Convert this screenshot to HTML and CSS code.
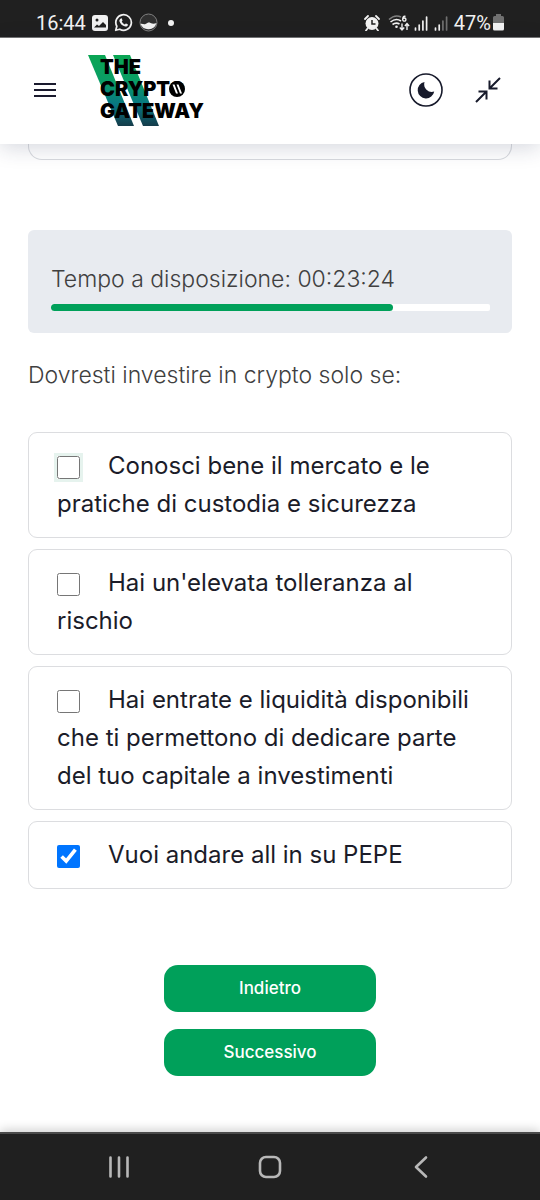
FILE: index.html
```html
<!DOCTYPE html>
<html lang="it">
<head>
<meta charset="utf-8">
<meta name="viewport" content="width=device-width, initial-scale=1">
<title>The Crypto Gateway</title>
<link rel="stylesheet" href="styles.css">
</head>
<body>
<div class="status-bar">
  <div class="status-group">
    <span class="status-text">16:44</span>
    <svg width="16" height="16" viewBox="0 0 16 16" aria-hidden="true"><rect width="16" height="16" rx="3" fill="#f2f2f2"/><circle cx="5" cy="5" r="1.5" fill="#202020"/><path d="M2 12.500l3-3 2 1.500 4-4 3 3v2.500z" fill="#202020"/></svg>
    <svg width="19" height="19" viewBox="0 0 24 24" aria-hidden="true"><path d="M2.200 21.800l1.400-5A9.800 9.800 0 1 1 7.300 20.500z" fill="none" stroke="#f2f2f2" stroke-width="2.200" stroke-linejoin="round"/><path d="M8.700 6.800c.5-.3 1-.1 1.200.4l.8 1.800c.1.400 0 .7-.9 1.700.9 1.800 2.200 2.900 4 3.700.7-.8 1-1.300 1.400-1.100l2 1c.5.300.5.700.3 1.200-.5 1.300-2 1.900-3.300 1.600-3.600-.8-6.300-3.400-7.400-6.700-.3-1.300.6-3 1.900-3.600z" fill="#f2f2f2"/></svg>
    <svg width="19" height="19" viewBox="0 0 19 19" aria-hidden="true"><circle cx="9.500" cy="9.500" r="8.500" fill="#303030" stroke="#808080"/><path d="M1.500 11c2-1 3 1 5 0s3-2 5-1 4 1 6 0a8.500 8.500 0 0 1-16 1z" fill="#f2f2f2"/></svg>
    <svg class="status-dot" width="6" height="6" viewBox="0 0 6 6" aria-hidden="true"><circle cx="3" cy="3" r="3" fill="#f2f2f2"/></svg>
  </div>
  <div class="status-group status-group-end">
    <svg width="16" height="16" viewBox="0 0 16 16" aria-hidden="true"><circle cx="8" cy="8.500" r="6.500" fill="#f2f2f2"/><path d="M1 4l3-3M15 4l-3-3M3.500 13.500L2 15.500M12.500 13.500l1.500 2" stroke="#f2f2f2" stroke-width="1.800" stroke-linecap="round"/><path d="M8 5v4h3.500" fill="none" stroke="#202020" stroke-width="1.500"/></svg>
    <svg class="wifi" width="22" height="18" viewBox="0 0 22 18" aria-hidden="true"><g fill="none" stroke="#f2f2f2" stroke-width="1.600"><path d="M1 5.500Q7 0 13 3" stroke="#808080"/><path d="M2.500 8Q8 3.500 13 7M4.500 10.500Q8 8 11.500 10"/><path d="M17.500 2.500c-2-.8-2.800 1-2.800 3a1.600 1.600 0 1 0 .4-1" stroke-width="1.400"/><path d="M14 9.500v6M11.800 13.500l2.200 2.500 2.200-2.500M19 16v-6M16.900 12l2.100-2.500 2.100 2.500" stroke-width="1.400"/></g><circle cx="8.500" cy="12.700" r="1.300" fill="#f2f2f2"/></svg>
    <svg width="14" height="16" viewBox="0 0 14 16" aria-hidden="true"><path d="M1.500 15v-2M5.200 15v-5M8.900 15V6M12.600 15V2" stroke="#f2f2f2" stroke-width="1.700" stroke-linecap="round"/></svg>
    <svg class="signal" width="14" height="16" viewBox="0 0 14 16" aria-hidden="true"><path d="M1.500 15v-2M5.200 15v-5" stroke="#f2f2f2" stroke-width="1.700" stroke-linecap="round"/><path d="M8.900 15V6M12.600 15V2" stroke="#707070" stroke-width="1.700" stroke-linecap="round"/></svg>
    <span class="battery"><span class="status-text">47%</span>
    <svg width="11" height="17" viewBox="0 0 11 17" aria-hidden="true"><path d="M3 0h5v2h1.500Q11 2 11 3.500V9H0V3.500Q0 2 1.500 2H3z" fill="#707070"/><path d="M0 9h11v6q0 1.500-1.500 1.500h-8Q0 16.500 0 15z" fill="#f2f2f2"/></svg></span>
  </div>
</div>

<header class="app-header">
  <button class="icon-button" type="button" aria-label="Menu"><svg width="24" height="16" viewBox="0 0 24 16"><path d="M1 2h22M1 8h22M1 14h22" stroke="#1a1a2e" stroke-width="2"/></svg></button>
  <a class="logo" href="#" aria-label="The Crypto Gateway">
    <svg width="118" height="74" viewBox="0 0 118 74">
      <defs><linearGradient id="stripe" x1="0" y1="0" x2="0" y2="1"><stop offset="0" stop-color="#0aa553"/><stop offset=".35" stop-color="#0a9e65"/><stop offset=".7" stop-color="#087783"/><stop offset="1" stop-color="#153c4a"/></linearGradient></defs>
      <path d="M0 2h17l29 71H30z" fill="url(#stripe)"/>
      <path d="M25 2h17l29 71H55z" fill="url(#stripe)"/>
      <g class="logo-text"><text x="12" y="21">THE</text><text x="12" y="43">CRYPTO</text><text x="12" y="65">GATEWAY</text></g>
      <circle cx="89" cy="36" r="8" fill="#000"/>
      <path d="M84.500 31.500h2l3.500 9h-2zM88.500 31.500h2l3.500 9h-2z" fill="#fff"/>
    </svg>
  </a>
  <button class="icon-button theme-button" type="button" aria-label="Tema scuro"><svg width="34" height="34" viewBox="0 0 34 34"><circle cx="17" cy="17" r="16" fill="none" stroke="#171a2b" stroke-width="1.600"/><path d="M15.500 9A8.300 8.300 0 1 0 25.200 18.500 7.700 7.700 0 0 1 15.500 9z" fill="#171a2b"/></svg></button>
  <button class="icon-button" type="button" aria-label="Riduci"><svg width="26" height="26" viewBox="0 0 26 26"><path d="M25 1L14.500 11.500M14.500 3.500v8h8M1 25l10.500-10.500M3.500 14.500h8v8" fill="none" stroke="#171a2b" stroke-width="2"/></svg></button>
</header>

<main class="quiz">
  <div class="previous-card"></div>
  <section class="timer">
    <p class="timer-text" id="timer-label">Tempo a disposizione: 00:23:24</p>
    <div class="timer-track" role="progressbar" aria-labelledby="timer-label" aria-valuenow="78" aria-valuemin="0" aria-valuemax="100"><div class="timer-fill" style="width: 78%"></div></div>
  </section>
  <form class="question">
    <p class="question-text">Dovresti investire in crypto solo se:</p>
    <div class="options">
      <label class="option"><input class="option-check option-check-active" type="checkbox">Conosci bene il mercato e le pratiche di custodia e sicurezza</label>
      <label class="option"><input class="option-check" type="checkbox">Hai un'elevata tolleranza al rischio</label>
      <label class="option"><input class="option-check" type="checkbox">Hai entrate e liquidità disponibili che ti permettono di dedicare parte del tuo capitale a investimenti</label>
      <label class="option"><input class="option-check" type="checkbox" checked>Vuoi andare all in su PEPE</label>
    </div>
    <div class="actions">
      <button class="action" type="button">Indietro</button>
      <button class="action" type="button">Successivo</button>
    </div>
  </form>
</main>

<nav class="system-nav" aria-label="Sistema">
  <button class="icon-button" type="button" aria-label="Recenti"><svg width="24" height="24" viewBox="0 0 24 24"><path d="M3.500 2.500v19M12 2.500v19M20.500 2.500v19" stroke="#b8b8b8" stroke-width="2.600" stroke-linecap="round"/></svg></button>
  <button class="icon-button" type="button" aria-label="Home"><svg width="24" height="24" viewBox="0 0 24 24"><rect x="2" y="2" width="20" height="20" rx="6" fill="none" stroke="#b8b8b8" stroke-width="2.600"/></svg></button>
  <button class="icon-button" type="button" aria-label="Indietro"><svg width="24" height="24" viewBox="0 0 24 24"><path d="M17 2.500L7 12l10 9.500" fill="none" stroke="#b8b8b8" stroke-width="2.600" stroke-linecap="round" stroke-linejoin="round"/></svg></button>
</nav>
</body>
</html>
```
FILE: styles.css
```css
* { box-sizing: border-box; }

body {
  margin: 0;
  min-height: 100vh;
  display: flex;
  flex-direction: column;
  background: #fff;
  color: #1b1c29;
  font-family: Inter, "Liberation Sans", sans-serif;
}

p { margin: 0; }

.icon-button {
  display: flex;
  padding: 0;
  border: 0;
  background: none;
}

.status-bar {
  display: flex;
  justify-content: space-between;
  padding: 8px 36px 0;
  height: 38px;
  background: #202020;
  border-bottom: 1px solid #777;
  color: #f2f2f2;
}

.status-group {
  display: flex;
  align-items: center;
  gap: 6px;
}

.status-group-end { gap: 4px; }
.status-dot { margin-left: 4px; }
.wifi { margin-left: 4px; }
.signal { margin-left: 2px; }

.status-text {
  font: 400 20px/28px Roboto, sans-serif;
}

.battery {
  display: flex;
  align-items: center;
  gap: 2px;
  margin-left: 2px;
}

.app-header {
  position: relative;
  z-index: 1;
  display: flex;
  align-items: center;
  padding: 0 39px 2px 33px;
  height: 106px;
  background: #fff;
  box-shadow: 0 4px 20px rgba(30, 40, 80, 0.18);
}

.logo {
  display: flex;
  margin-left: 31px;
}

.logo-text {
  font: 900 20px Inter, sans-serif;
  fill: #000;
}

.theme-button {
  margin-left: auto;
  margin-right: 32px;
}

.quiz {
  flex: 1;
  padding: 0 28px 56px;
}

.previous-card {
  height: 16px;
  border: 1px solid #d9dbdf;
  border-top: 0;
  border-radius: 0 0 14px 14px;
}

.timer {
  margin-top: 70px;
  padding: 30px 22px 22px 23px;
  border-radius: 6px;
  background: #e8ebf0;
}

.timer-text,
.question-text {
  font-size: 23px;
  font-weight: 300;
  line-height: 38px;
  color: #404040;
}

.timer-track {
  margin-top: 6px;
  height: 7px;
  border-radius: 2px;
  background: #fff;
}

.timer-fill {
  height: 100%;
  border-radius: 4px;
  background: #00a05a;
}

.question { margin-top: 23px; }

.options {
  display: flex;
  flex-direction: column;
  gap: 11px;
  margin-top: 38px;
}

.option {
  padding: 14px 28px;
  border: 1px solid #dcdde0;
  border-radius: 9px;
  font-size: 24px;
  font-weight: 400;
  line-height: 38px;
}

.option-check {
  width: 23px;
  height: 23px;
  margin: 0 28px 0 0;
  vertical-align: -5px;
}

.option-check-active { box-shadow: 0 0 0 3px #e6f3ee; }

.actions {
  display: flex;
  flex-direction: column;
  align-items: center;
  gap: 17px;
  margin-top: 76px;
}

.action {
  width: 212px;
  height: 47px;
  padding: 0 16px 2px;
  border: 0;
  border-radius: 14px;
  background: #00a05a;
  color: #fff;
  font: 500 17px/24px Inter, sans-serif;
}

.system-nav {
  display: flex;
  justify-content: space-between;
  align-items: center;
  padding: 0 107px;
  height: 68px;
  border-top: 2px solid #4a4a4a;
  background: #202020;
  box-shadow: 0 -2px 10px rgba(0, 0, 0, 0.2);
}
```
